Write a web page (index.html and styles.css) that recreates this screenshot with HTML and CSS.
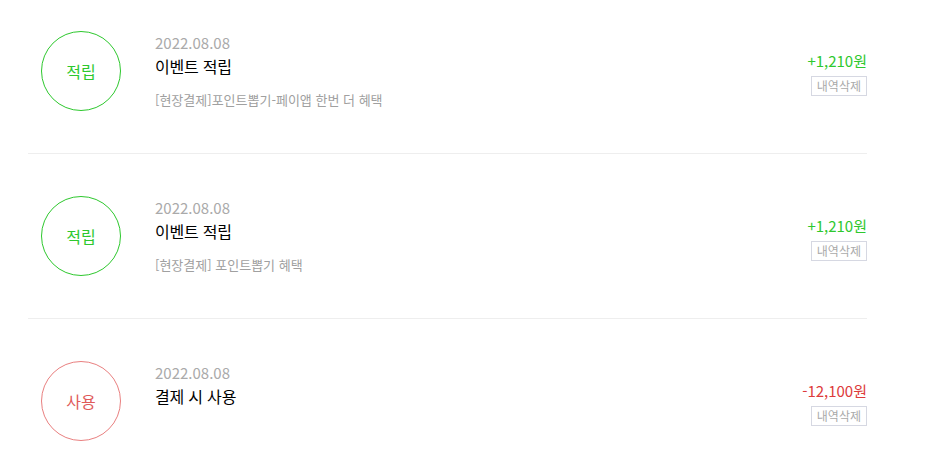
FILE: index.html
```html
<!DOCTYPE html>
<html lang="ko">
<head>
<meta charset="utf-8">
<title>포인트 내역</title>
<link rel="stylesheet" href="styles.css">
</head>
<body>
<ul class="list">
  <li class="row first">
    <div class="badge save">적립</div>
    <div class="info">
      <div class="date">2022.08.08</div>
      <div class="title">이벤트 적립</div>
      <div class="desc">[현장결제]포인트뽑기-페이앱 한번 더 혜택</div>
    </div>
    <div class="side">
      <div class="amount plus">+1,210원</div>
      <button class="del" type="button">내역삭제</button>
    </div>
  </li>
  <li class="row">
    <div class="badge save">적립</div>
    <div class="info">
      <div class="date">2022.08.08</div>
      <div class="title">이벤트 적립</div>
      <div class="desc">[현장결제] 포인트뽑기 혜택</div>
    </div>
    <div class="side">
      <div class="amount plus">+1,210원</div>
      <button class="del" type="button">내역삭제</button>
    </div>
  </li>
  <li class="row">
    <div class="badge use">사용</div>
    <div class="info">
      <div class="date">2022.08.08</div>
      <div class="title">결제 시 사용</div>
    </div>
    <div class="side">
      <div class="amount minus">-12,100원</div>
      <button class="del" type="button">내역삭제</button>
    </div>
  </li>
</ul>
</body>
</html>
```
FILE: styles.css
```css
* { box-sizing: border-box; }
html, body {
  margin: 0;
  padding: 0;
  background: #fff;
  font-family: "Noto Sans CJK KR", "Noto Sans", sans-serif;
}
.list {
  list-style: none;
  margin: 0 0 0 28px;
  padding: 0;
  width: 839px;
}
.row {
  display: flex;
  align-items: flex-start;
  padding: 42px 0 42px;
  border-bottom: 1px solid #eeeeee;
}
.row.first { padding-top: 31px; }
.badge {
  flex: none;
  width: 80px;
  height: 80px;
  margin-left: 13px;
  border-radius: 50%;
  display: flex;
  align-items: center;
  justify-content: center;
  font-size: 16px;
}
.badge.save { border: 1px solid #2ec82e; color: #2ec82e; }
.badge.use { border: 1px solid #e98080; color: #e05a5a; }
.info {
  flex: 1;
  margin-left: 34px;
}
.date {
  font-size: 15px;
  line-height: 22px;
  color: #aaaaaa;
  padding-top: 1px;
}
.title {
  font-size: 16px;
  line-height: 24px;
  letter-spacing: -0.2px;
  color: #000;
}
.desc {
  margin-top: 12px;
  font-size: 13px;
  line-height: 20px;
  color: #a0a0a0;
}
.side {
  display: flex;
  flex-direction: column;
  align-items: flex-end;
  padding-top: 19px;
}
.amount {
  font-size: 15px;
  line-height: 22px;
}
.amount.plus { color: #2ec82e; }
.amount.minus { color: #dd3b3b; }
.del {
  margin-top: 4px;
  height: 20px;
  padding: 0 5px;
  border: 1px solid #d6d8e2;
  background: #fff;
  color: #aaaaaa;
  font-family: inherit;
  font-size: 12px;
  line-height: 18px;
}
```
